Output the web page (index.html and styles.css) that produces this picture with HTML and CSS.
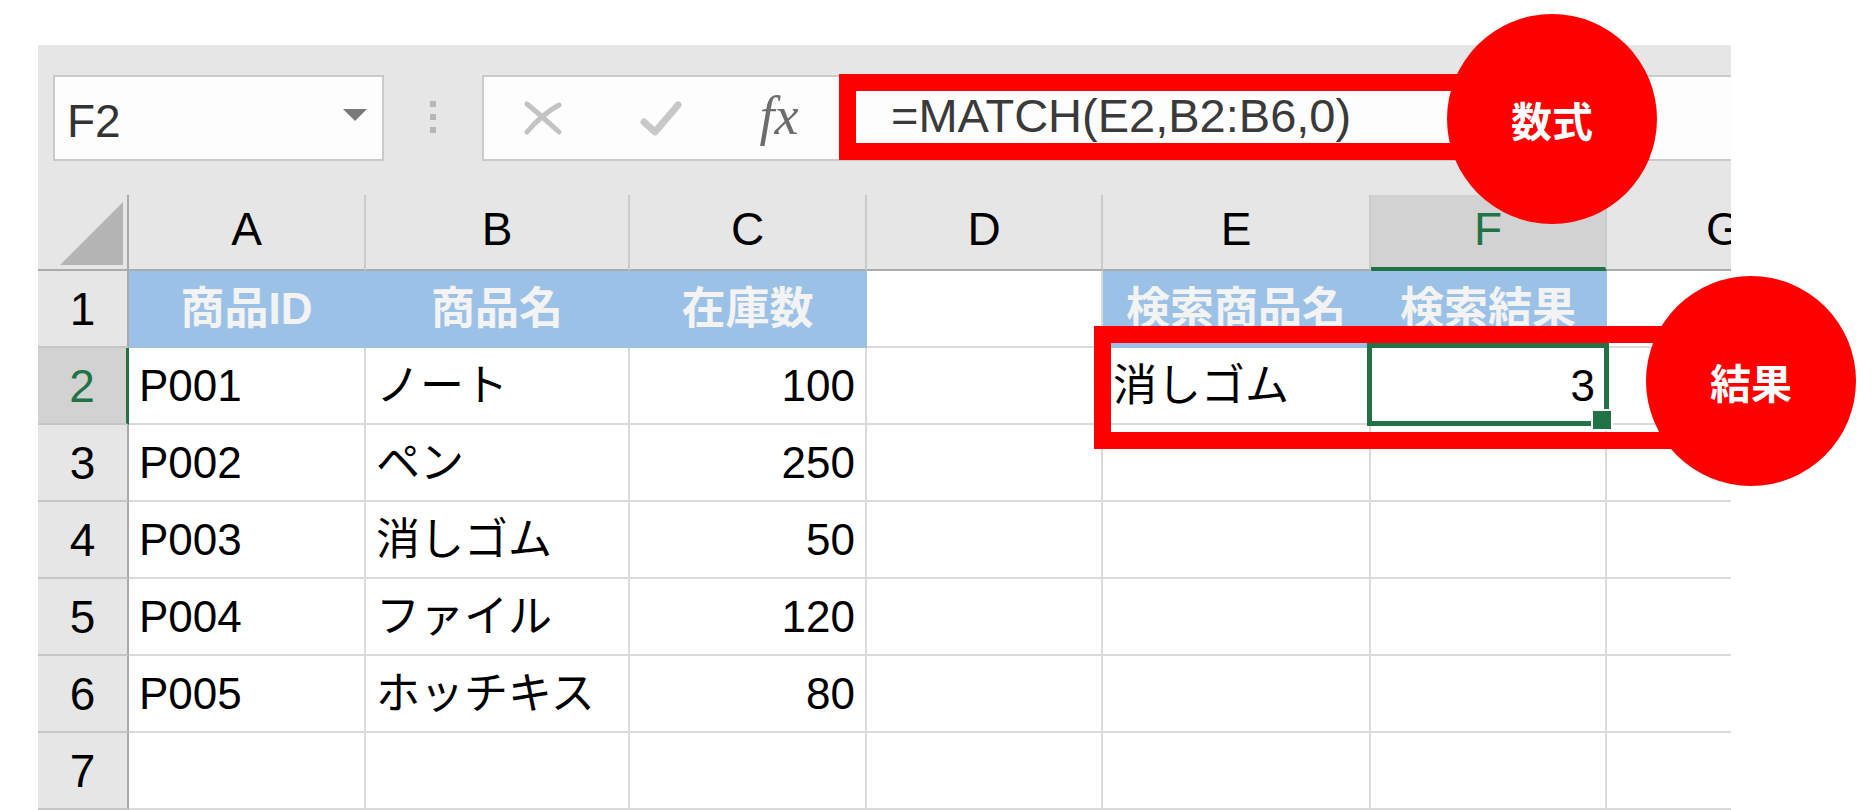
FILE: index.html
```html
<!DOCTYPE html>
<html lang="ja">
<head>
    <meta charset="UTF-8">
    <meta name="viewport" content="width=device-width, initial-scale=1.0">
    <title>MATCH関数</title>
    <link rel="stylesheet" href="styles.css">
</head>
<body>
    <div class="sheet">
        <!-- 名前ボックスと数式バー -->
        <div class="formula-bar">
            <div class="name-box">
                <span class="name-text">F2</span>
                <span class="name-arrow"></span>
            </div>
            <div class="grip"><i></i><i></i><i></i></div>
            <div class="formula-box">
                <span class="fb-btn">
                    <svg width="38" height="34" viewBox="0 0 38 34">
                        <path d="M3 3 C 13 11, 24 21, 35 31" fill="none" stroke="#c3c3c3" stroke-width="5" stroke-linecap="round"/>
                        <path d="M35 4 C 24 10, 13 19, 3 31" fill="none" stroke="#c3c3c3" stroke-width="5" stroke-linecap="round"/>
                    </svg>
                </span>
                <span class="fb-btn">
                    <svg width="44" height="38" viewBox="0 0 44 38">
                        <path d="M5 23 L16 33 L39 6" fill="none" stroke="#c8c8c8" stroke-width="7" stroke-linecap="round" stroke-linejoin="round"/>
                    </svg>
                </span>
                <span class="fb-btn fx">fx</span>
                <span class="formula-text">=MATCH(E2,B2:B6,0)</span>
            </div>
        </div>

        <!-- セル -->
        <div class="grid">
            <div class="corner"><span class="corner-tri"></span></div>
            <div class="ch">A</div>
            <div class="ch">B</div>
            <div class="ch">C</div>
            <div class="ch">D</div>
            <div class="ch">E</div>
            <div class="ch ch-sel">F</div>
            <div class="ch">G</div>

            <div class="rh">1</div>
            <div class="c head">商品ID</div>
            <div class="c head">商品名</div>
            <div class="c head">在庫数</div>
            <div class="c"></div>
            <div class="c head">検索商品名</div>
            <div class="c head">検索結果</div>
            <div class="c"></div>

            <div class="rh rh-sel">2</div>
            <div class="c">P001</div>
            <div class="c">ノート</div>
            <div class="c num">100</div>
            <div class="c"></div>
            <div class="c">消しゴム</div>
            <div class="c num sel">3</div>
            <div class="c"></div>

            <div class="rh">3</div>
            <div class="c">P002</div>
            <div class="c">ペン</div>
            <div class="c num">250</div>
            <div class="c"></div>
            <div class="c"></div>
            <div class="c"></div>
            <div class="c"></div>

            <div class="rh">4</div>
            <div class="c">P003</div>
            <div class="c">消しゴム</div>
            <div class="c num">50</div>
            <div class="c"></div>
            <div class="c"></div>
            <div class="c"></div>
            <div class="c"></div>

            <div class="rh">5</div>
            <div class="c">P004</div>
            <div class="c">ファイル</div>
            <div class="c num">120</div>
            <div class="c"></div>
            <div class="c"></div>
            <div class="c"></div>
            <div class="c"></div>

            <div class="rh">6</div>
            <div class="c">P005</div>
            <div class="c">ホッチキス</div>
            <div class="c num">80</div>
            <div class="c"></div>
            <div class="c"></div>
            <div class="c"></div>
            <div class="c"></div>

            <div class="rh">7</div>
            <div class="c"></div>
            <div class="c"></div>
            <div class="c"></div>
            <div class="c"></div>
            <div class="c"></div>
            <div class="c"></div>
            <div class="c"></div>
        </div>
    </div>

    <!-- 注釈 -->
    <div class="mark mark-formula"></div>
    <div class="mark mark-result"></div>
    <div class="callout callout-formula">数式</div>
    <div class="callout callout-result">結果</div>
</body>
</html>
```

FILE: styles.css
```css
* {
    box-sizing: border-box;
}

body {
    margin: 0;
    width: 1872px;
    height: 810px;
    overflow: hidden;
    position: relative;
    background: #fff;
    font-family: "Liberation Sans", "Noto Sans CJK JP", sans-serif;
}

.sheet {
    margin: 45px 0 0 38px;
    width: 1693px;
    height: 765px;
    background: #e6e6e6;
    overflow: hidden;
}

/* formula bar */
.formula-bar {
    height: 150px;
    display: flex;
    align-items: flex-start;
    padding: 30px 0 0 15px;
}

.name-box {
    width: 331px;
    height: 86px;
    flex-shrink: 0;
    background: #fdfdfd;
    border: 2px solid #cacaca;
    display: flex;
    align-items: center;
    justify-content: space-between;
    padding: 6px 15px 0 12px;
}

.name-text {
    font-size: 46px;
    line-height: 1;
    color: #333;
}

.name-arrow {
    width: 0;
    height: 0;
    border-left: 12px solid transparent;
    border-right: 12px solid transparent;
    border-top: 12px solid #797979;
    margin-bottom: 12px;
}

.grip {
    margin: 26px 0 0 46px;
    display: flex;
    flex-direction: column;
    gap: 7px;
}

.grip i {
    display: block;
    width: 6px;
    height: 6px;
    background: #b6b6b6;
}

.formula-box {
    flex: 1 0 auto;
    height: 86px;
    margin-left: 46px;
    background: #fdfdfd;
    border: 2px solid #cacaca;
    border-right: none;
    display: flex;
    align-items: center;
}

.fb-btn {
    width: 118px;
    display: flex;
    justify-content: center;
    align-items: center;
}

.fx {
    font-family: "Liberation Serif", serif;
    font-style: italic;
    font-size: 54px;
    line-height: 1;
    color: #6d6d6d;
    padding-bottom: 4px;
}

.formula-text {
    padding: 0 0 6px 53px;
    font-size: 47px;
    line-height: 1;
    color: #3a3a3a;
}

/* grid */
.grid {
    display: grid;
    grid-template-columns: 91px 237px 264px 237px 236px 268px 236px 236px;
    grid-template-rows: 76px repeat(7, 77px);
    width: max-content;
}

.corner {
    background: #e6e6e6;
    border-right: 2px solid #a9a9a9;
    border-bottom: 2px solid #ababab;
    display: flex;
    justify-content: flex-end;
    align-items: flex-end;
    padding: 0 4px 4px 0;
}

.corner-tri {
    width: 63px;
    height: 63px;
    background: #b4b4b4;
    clip-path: polygon(100% 0, 100% 100%, 0 100%);
}

.ch {
    background: #e6e6e6;
    border-right: 2px solid #cbcbcb;
    border-bottom: 2px solid #ababab;
    display: flex;
    justify-content: center;
    align-items: center;
    padding-bottom: 6px;
    font-size: 46px;
    line-height: 1;
    color: #000;
}

.ch-sel {
    background: #d2d2d2;
    color: #217346;
    border-bottom: 4px solid #217346;
    padding-bottom: 4px;
}

.rh {
    background: #e6e6e6;
    border-right: 2px solid #a9a9a9;
    border-bottom: 2px solid #c6c6c6;
    display: flex;
    justify-content: center;
    align-items: center;
    font-size: 46px;
    line-height: 1;
    color: #000;
}

.rh-sel {
    background: #d2d2d2;
    color: #217346;
    border-right: 3px solid #217346;
}

.c {
    background: #fff;
    border-right: 2px solid #dadada;
    border-bottom: 2px solid #dadada;
    display: flex;
    align-items: center;
    padding: 0 10px;
    font-size: 44px;
    line-height: 1;
    color: #000;
    white-space: nowrap;
}

.num {
    justify-content: flex-end;
}

.head {
    background: #9bc2e6;
    border-color: #9bc2e6;
    justify-content: center;
    font-weight: bold;
    color: #f3f3f3;
    padding: 0;
}

.sel {
    position: relative;
}

.sel::before {
    content: "";
    position: absolute;
    top: -5px;
    left: -4px;
    right: -4px;
    bottom: -3px;
    border: 5px solid #217346;
}

.sel::after {
    content: "";
    position: absolute;
    right: -8px;
    bottom: -8px;
    width: 18px;
    height: 18px;
    background: #217346;
    border: 2px solid #fff;
}

/* annotations */
.mark {
    position: absolute;
    border: 17px solid #ff0000;
}

.mark-formula {
    left: 839px;
    top: 74px;
    width: 641px;
    height: 86px;
}

.mark-result {
    left: 1094px;
    top: 326px;
    width: 586px;
    height: 123px;
}

.callout {
    position: absolute;
    width: 210px;
    height: 210px;
    border-radius: 50%;
    background: #ff0000;
    color: #fff;
    display: flex;
    justify-content: center;
    align-items: center;
    font-family: "Noto Sans CJK JP", sans-serif;
    font-weight: bold;
    font-size: 41px;
    line-height: 1;
}

.callout-formula {
    left: 1447px;
    top: 14px;
}

.callout-result {
    left: 1646px;
    top: 276px;
}
```
